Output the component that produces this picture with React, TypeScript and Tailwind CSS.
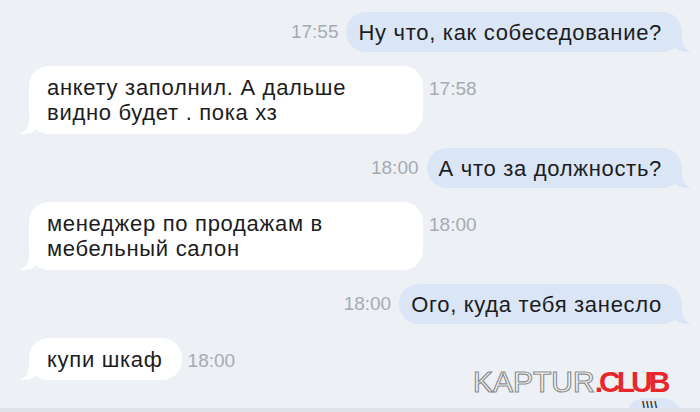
type Side = "in" | "out";

interface Message {
  side: Side;
  text: string[];
  time: string;
}

const messages: Message[] = [
  { side: "out", text: ["Ну что, как собеседование?"], time: "17:55" },
  { side: "in", text: ["анкету заполнил. А дальше", "видно будет . пока хз"], time: "17:58" },
  { side: "out", text: ["А что за должность?"], time: "18:00" },
  { side: "in", text: ["менеджер по продажам в", "мебельный салон"], time: "18:00" },
  { side: "out", text: ["Ого, куда тебя занесло"], time: "18:00" },
  { side: "in", text: ["купи шкаф"], time: "18:00" }
];

const timeClassName = "text-[19px] leading-[18px] text-[#a6abb3] whitespace-nowrap";
const bodyClassName = "text-[22px] leading-[25px] tracking-[0.7px] text-[#1c1c1e]";

function InTail() {
  return (
    <svg className="absolute -left-[9px] bottom-0" width="16" height="16" viewBox="0 0 16 16">
      <path d="M16 0 L9 0 C9 8 7 13 0 16 C7 16 12 15 16 12 Z" fill="#ffffff" />
    </svg>
  );
}

function OutTail() {
  return (
    <svg className="absolute -right-[9px] bottom-0" width="16" height="16" viewBox="0 0 16 16">
      <path d="M0 0 L7 0 C7 8 9 13 16 16 C9 16 4 15 0 12 Z" fill="#dae6f5" />
    </svg>
  );
}

function MessageRow({ message }: { message: Message }) {
  const multiline = message.text.length > 1;

  if (message.side === "out") {
    return (
      <div className="flex items-center justify-end gap-[8px]">
        <span className={timeClassName}>{message.time}</span>
        <div className={`relative rounded-[20px] bg-[#dae6f5] py-[7.5px] pl-[12px] pr-[20px] ${bodyClassName}`}>
          {message.text[0]}
          <OutTail />
        </div>
      </div>
    );
  }

  return (
    <div className="flex items-start gap-[6px]">
      <div
        className={`relative rounded-[20px] bg-white pl-[18px] pr-[19px] ${bodyClassName} ${
          multiline ? "w-[394px] py-[9px]" : "py-[8.5px]"
        }`}
      >
        {message.text.map((line) => (
          <div key={line}>{line}</div>
        ))}
        <InTail />
      </div>
      <span className={`${timeClassName} mt-[14px]`}>{message.time}</span>
    </div>
  );
}

export default function App() {
  return (
    <div className="relative flex h-[412px] w-full flex-col overflow-hidden bg-[#edf0f5] font-['Liberation_Sans',Arial,sans-serif]">
      <div className="flex flex-1 flex-col gap-[14px] overflow-hidden pl-[29px] pr-[18px] pt-[12px]">
        {messages.map((message, index) => (
          <MessageRow key={index} message={message} />
        ))}

        <div className="mt-[4px] flex justify-end gap-[10px]">
          <span className={`${timeClassName} mt-[10px]`}>18:00</span>
          <div className="h-[40px] w-[56px] rounded-[20px] bg-[#dae6f5] pl-[16px] pt-[2px] text-[11px] font-bold leading-none tracking-[1px] text-[#2a2a2a]">
            \\\\
          </div>
        </div>
      </div>

      <div className="h-[4px] bg-[#dfe3e9]" />

      <div className="absolute left-[473px] top-[367px] whitespace-nowrap text-[30px] leading-none">
        <span className="text-white [-webkit-text-stroke:1.2px_#8d8d8d]">KAPTUR</span>
        <span className="font-bold tracking-[-4px] text-[#e8262b]">.CLUB</span>
      </div>
    </div>
  );
}
